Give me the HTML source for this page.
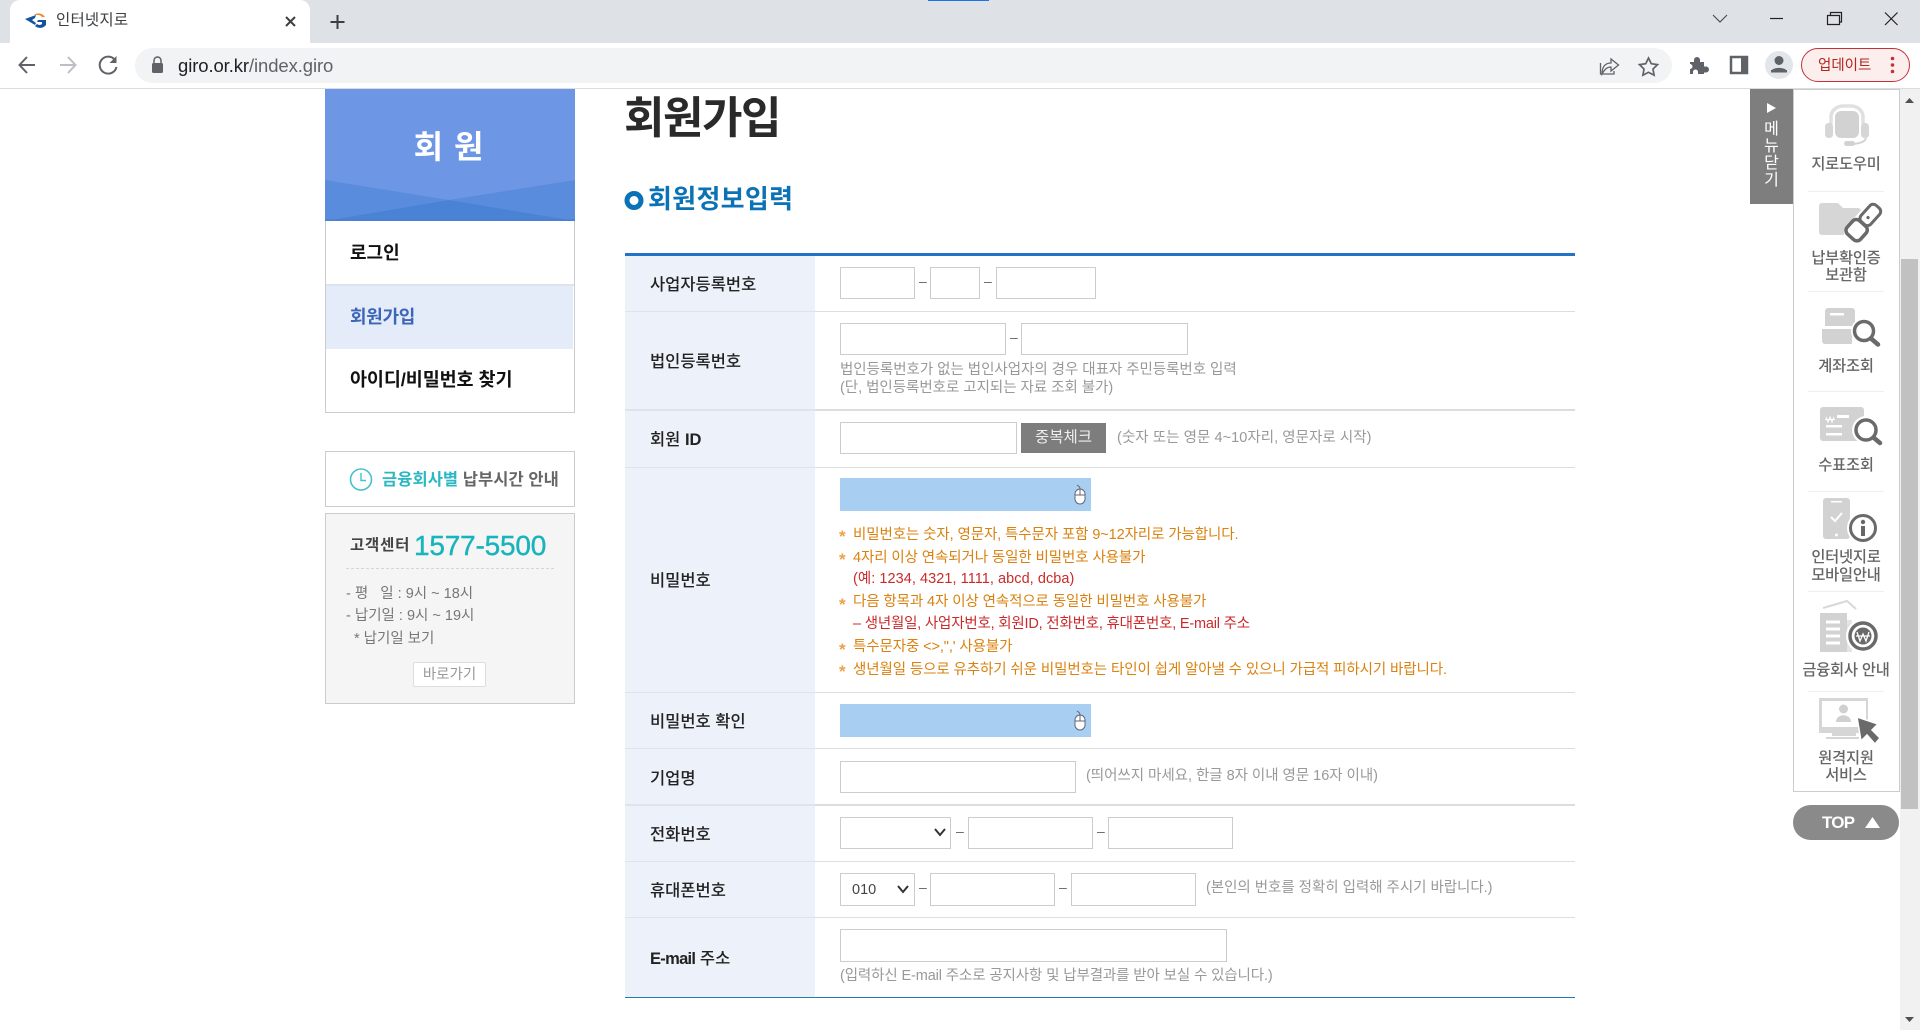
<!DOCTYPE html>
<html lang="ko"><head><meta charset="utf-8"><title>인터넷지로</title>
<style>
html,body{margin:0;padding:0;width:1920px;height:1030px;overflow:hidden;background:#fff}
body{position:relative;font-family:"Liberation Sans","Noto Sans CJK KR",sans-serif;color:#222}
.b,.t,input,select{position:absolute;box-sizing:border-box}
.t{white-space:nowrap;line-height:20px}
.in{position:absolute;box-sizing:border-box;border:1px solid #ccc;background:#fff}
.lb{font-size:16.5px;font-weight:500;color:#222;left:650px}
.h{font-size:14.5px;color:#999;letter-spacing:-.03px}
.o{font-size:14.5px;color:#d9820f;left:853px;letter-spacing:-.1px}
.r{font-size:14.5px;color:#cc2a2a;left:853px;letter-spacing:-.1px}
.s{font-size:17px;font-weight:700;color:#eda04a;left:839px;width:8px}
.m{font-size:15.3px;font-weight:500;color:#666;text-align:center;left:1793px;width:106px;letter-spacing:-.2px}
.ln{position:absolute;left:815px;width:760px;background:#ddd}
.lc{position:absolute;left:625px;width:190px;background:#dfe3ec}
.d{font-size:14px;color:#666}
svg{position:absolute;left:0;top:0}
</style></head><body>
<!-- chrome -->
<div class="b" style="left:0;top:0;width:1920px;height:43px;background:#dee1e6"></div>
<div class="b" style="left:928px;top:0;width:61px;height:1px;background:#1a73e8"></div>
<div class="b" style="left:10px;top:0;width:300px;height:43px;background:#fff;border-radius:10px 10px 0 0"></div>
<div class="b" style="left:0;top:43px;width:1920px;height:45px;background:#fff"></div>
<div class="b" style="left:0;top:88px;width:1920px;height:1px;background:#dadce0"></div>
<div class="b" style="left:135px;top:48px;width:1537px;height:35px;background:#f1f3f4;border-radius:18px"></div>
<div class="t" style="left:56px;top:11px;font-size:15.5px;color:#3c4043;letter-spacing:.2px">인터넷지로</div>
<div class="t" style="left:178px;top:56px;font-size:18.5px;color:#202124;letter-spacing:-.1px">giro.or.kr<span style="color:#5f6368">/index.giro</span></div>
<div class="b" style="left:1801px;top:48px;width:109px;height:34px;border:1.5px solid #c5303a;border-radius:17px;background:#fdeeee"></div>
<div class="t" style="left:1818px;top:56px;font-size:14.5px;color:#b3261e">업데이트</div>

<!-- left sidebar -->
<div class="b" style="left:325px;top:89px;width:250px;height:132px;background:#6d97e4;overflow:hidden"></div>
<div class="t" style="left:325px;width:248px;text-align:center;top:127px;line-height:40px;font-size:32px;font-weight:700;color:#fff;letter-spacing:1px">회 원</div>
<div class="b" style="left:325px;top:221px;width:250px;height:192px;border:1px solid #ccc;border-top:0"></div>
<div class="b" style="left:326px;top:284px;width:248px;height:2px;background:#dde4ee"></div>
<div class="b" style="left:326px;top:286px;width:247px;height:63px;background:#e4ecfa"></div>
<div class="t" style="left:350px;top:243px;font-size:18px;font-weight:700;color:#111">로그인</div>
<div class="t" style="left:350px;top:307px;font-size:18px;font-weight:700;color:#3d66b8;letter-spacing:-.3px">회원가입</div>
<div class="t" style="left:350px;top:370px;font-size:18.5px;font-weight:700;color:#111;letter-spacing:-.1px">아이디/비밀번호 찾기</div>

<div class="b" style="left:325px;top:451px;width:250px;height:56px;border:1px solid #ccc;background:#fff"></div>
<div class="t" style="left:382px;top:470px;font-size:16.5px;font-weight:700;color:#666;letter-spacing:.05px"><span style="color:#2bb8c4">금융회사별</span> 납부시간 안내</div>
<div class="b" style="left:325px;top:513px;width:250px;height:191px;border:1px solid #ccc;background:#f5f5f5"></div>
<div class="t" style="left:350px;top:536px;font-size:15.5px;font-weight:700;color:#444;letter-spacing:.8px">고객센터</div>
<div class="t" style="left:414px;top:530px;line-height:32px;font-size:28px;color:#18b4bd;letter-spacing:-.2px;-webkit-text-stroke:.4px #18b4bd">1577-5500</div>
<div class="b" style="left:346px;top:568px;width:208px;height:0;border-top:1px dashed #d5d5d5"></div>
<div class="t" style="left:346px;top:584px;font-size:14.5px;color:#777">- 평 &nbsp; 일 : 9시 ~ 18시</div>
<div class="t" style="left:346px;top:606px;font-size:14.5px;color:#777">- 납기일 : 9시 ~ 19시</div>
<div class="t" style="left:354px;top:629px;font-size:14.5px;color:#777">* 납기일 보기</div>
<div class="b" style="left:413px;top:662px;width:73px;height:25px;border:1px solid #ddd;background:#fff;border-radius:2px;text-align:center;font-size:14.5px;line-height:24px;color:#999">바로가기</div>

<!-- main -->
<div class="t" style="left:624px;top:94px;line-height:50px;font-size:44px;font-weight:700;color:#2a2a2a;letter-spacing:-1.5px">회원가입</div>
<div class="t" style="left:648px;top:184px;line-height:30px;font-size:26px;font-weight:700;color:#0b72b5;letter-spacing:.3px">회원정보입력</div>

<!-- table -->
<div class="b" style="left:625px;top:256px;width:190px;height:741px;background:#edf1f9"></div>
<div class="b" style="left:625px;top:253px;width:950px;height:3px;background:#2272c9"></div>
<div class="lc" style="top:311px;height:1px"></div><div class="ln" style="top:311px;height:1px"></div>
<div class="lc" style="top:409px;height:2px"></div><div class="ln" style="top:409px;height:2px"></div>
<div class="lc" style="top:467px;height:1px"></div><div class="ln" style="top:467px;height:1px"></div>
<div class="lc" style="top:692px;height:1px"></div><div class="ln" style="top:692px;height:1px"></div>
<div class="lc" style="top:748px;height:1px"></div><div class="ln" style="top:748px;height:1px"></div>
<div class="lc" style="top:804px;height:2px"></div><div class="ln" style="top:804px;height:2px"></div>
<div class="lc" style="top:861px;height:1px"></div><div class="ln" style="top:861px;height:1px"></div>
<div class="lc" style="top:917px;height:1px"></div><div class="ln" style="top:917px;height:1px"></div>
<div class="b" style="left:625px;top:997px;width:950px;height:1px;background:#2a76b0"></div>

<div class="t lb" style="top:275px">사업자등록번호</div>
<div class="t lb" style="top:352px">법인등록번호</div>
<div class="t lb" style="top:430px">회원 <b>ID</b></div>
<div class="t lb" style="top:571px">비밀번호</div>
<div class="t lb" style="top:712px">비밀번호 확인</div>
<div class="t lb" style="top:769px">기업명</div>
<div class="t lb" style="top:825px">전화번호</div>
<div class="t lb" style="top:881px">휴대폰번호</div>
<div class="t lb" style="top:949px"><b style="letter-spacing:-.7px">E-mail</b> 주소</div>

<!-- row1 -->
<div class="in" style="left:840px;top:267px;width:75px;height:32px"></div>
<div class="in" style="left:930px;top:267px;width:50px;height:32px"></div>
<div class="in" style="left:996px;top:267px;width:100px;height:32px"></div>
<div class="t d" style="left:919px;top:271px">–</div><div class="t d" style="left:984px;top:271px">–</div>
<!-- row2 -->
<div class="in" style="left:840px;top:323px;width:166px;height:32px"></div>
<div class="in" style="left:1021px;top:323px;width:167px;height:32px"></div>
<div class="t d" style="left:1010px;top:327px">–</div>
<div class="t h" style="left:840px;top:360px">법인등록번호가 없는 법인사업자의 경우 대표자 주민등록번호 입력</div>
<div class="t h" style="left:840px;top:378px">(단, 법인등록번호로 고지되는 자료 조회 불가)</div>
<!-- row3 -->
<div class="in" style="left:840px;top:422px;width:177px;height:32px"></div>
<div class="b" style="left:1021px;top:423px;width:85px;height:30px;background:#7d7d7d;color:#eee;font-size:15.5px;line-height:29px;text-align:center">중복체크</div>
<div class="t h" style="left:1117px;top:428px;letter-spacing:.05px">(숫자 또는 영문 4~10자리, 영문자로 시작)</div>
<!-- row4 -->
<div class="b" style="left:840px;top:478px;width:251px;height:33px;background:#a8cff2"></div>
<div class="t s" style="top:527px">*</div><div class="t o" style="top:525px">비밀번호는 숫자, 영문자, 특수문자 포함 9~12자리로 가능합니다.</div>
<div class="t s" style="top:550px">*</div><div class="t o" style="top:548px">4자리 이상 연속되거나 동일한 비밀번호 사용불가</div>
<div class="t r" style="top:569px;letter-spacing:.05px">(예: 1234, 4321, 1111, abcd, dcba)</div>
<div class="t s" style="top:595px">*</div><div class="t o" style="top:592px">다음 항목과 4자 이상 연속적으로 동일한 비밀번호 사용불가</div>
<div class="t r" style="top:614px;letter-spacing:-.2px">– 생년월일, 사업자번호, 회원ID, 전화번호, 휴대폰번호, E-mail 주소</div>
<div class="t s" style="top:640px">*</div><div class="t o" style="top:637px">특수문자중 &lt;&gt;,",' 사용불가</div>
<div class="t s" style="top:662px">*</div><div class="t o" style="top:660px">생년월일 등으로 유추하기 쉬운 비밀번호는 타인이 쉽게 알아낼 수 있으니 가급적 피하시기 바랍니다.</div>
<!-- row5 -->
<div class="b" style="left:840px;top:704px;width:251px;height:33px;background:#a8cff2"></div>
<!-- row6 -->
<div class="in" style="left:840px;top:761px;width:236px;height:32px"></div>
<div class="t h" style="left:1086px;top:766px">(띄어쓰지 마세요, 한글 8자 이내 영문 16자 이내)</div>
<!-- row7 -->
<div class="in" style="left:840px;top:817px;width:111px;height:32px"></div>
<div class="t d" style="left:956px;top:821px">–</div>
<div class="in" style="left:968px;top:817px;width:125px;height:32px"></div>
<div class="t d" style="left:1097px;top:821px">–</div>
<div class="in" style="left:1108px;top:817px;width:125px;height:32px"></div>
<!-- row8 -->
<div class="in" style="left:840px;top:873px;width:75px;height:33px"></div>
<div class="t" style="left:852px;top:880px;font-size:14.5px;color:#444">010</div>
<div class="t d" style="left:919px;top:877px">–</div>
<div class="in" style="left:930px;top:873px;width:125px;height:33px"></div>
<div class="t d" style="left:1059px;top:877px">–</div>
<div class="in" style="left:1071px;top:873px;width:125px;height:33px"></div>
<div class="t h" style="left:1206px;top:878px">(본인의 번호를 정확히 입력해 주시기 바랍니다.)</div>
<!-- row9 -->
<div class="in" style="left:840px;top:929px;width:387px;height:33px"></div>
<div class="t h" style="left:840px;top:966px;letter-spacing:-.12px">(입력하신 E-mail 주소로 공지사항 및 납부결과를 받아 보실 수 있습니다.)</div>

<!-- right panel -->
<div class="b" style="left:1900px;top:89px;width:20px;height:941px;background:#f1f1f1"></div>
<div class="b" style="left:1901px;top:259px;width:17px;height:550px;background:#c1c1c1"></div>
<div class="b" style="left:1793px;top:89px;width:107px;height:703px;border:1px solid #ccc;background:#fff"></div>
<div class="b" style="left:1750px;top:89px;width:43px;height:115px;background:#7e7e7e"></div>
<div class="t" style="left:1750px;width:43px;text-align:center;top:120px;font-size:16px;color:#fff">메</div>
<div class="t" style="left:1750px;width:43px;text-align:center;top:137px;font-size:16px;color:#fff">뉴</div>
<div class="t" style="left:1750px;width:43px;text-align:center;top:154px;font-size:16px;color:#fff">닫</div>
<div class="t" style="left:1750px;width:43px;text-align:center;top:171px;font-size:16px;color:#fff">기</div>
<div class="b" style="left:1808px;top:191px;width:76px;height:1px;background:#eee"></div>
<div class="b" style="left:1808px;top:291px;width:76px;height:1px;background:#eee"></div>
<div class="b" style="left:1808px;top:391px;width:76px;height:1px;background:#eee"></div>
<div class="b" style="left:1808px;top:491px;width:76px;height:1px;background:#eee"></div>
<div class="b" style="left:1808px;top:591px;width:76px;height:1px;background:#eee"></div>
<div class="b" style="left:1808px;top:691px;width:76px;height:1px;background:#eee"></div>
<div class="t m" style="top:155px">지로도우미</div>
<div class="t m" style="top:249px">납부확인증</div><div class="t m" style="top:266px">보관함</div>
<div class="t m" style="top:357px">계좌조회</div>
<div class="t m" style="top:456px">수표조회</div>
<div class="t m" style="top:548px">인터넷지로</div><div class="t m" style="top:566px">모바일안내</div>
<div class="t m" style="top:661px">금융회사 안내</div>
<div class="t m" style="top:749px">원격지원</div><div class="t m" style="top:766px">서비스</div>
<div class="b" style="left:1793px;top:805px;width:106px;height:35px;border-radius:18px;background:#8a8a8a"></div>
<div class="t" style="left:1822px;top:813px;font-size:17px;font-weight:700;color:#fff;letter-spacing:-.8px">TOP</div>

<svg width="1920" height="1030" viewBox="0 0 1920 1030" fill="none">
<!-- favicon -->
<path d="M25 19 L36 15 L35 18 L32 20 L36 23 L35 25 Z" fill="#14549e"/>
<path d="M45 17 A7.5 7.5 0 0 0 34 15 L38 15 A5 5 0 0 1 42 17Z" fill="#ef8a2c"/>
<path d="M35 26 A7.5 7.5 0 0 0 46 25 V20 H38 L37 22 H42 V24 A4 4 0 0 1 37 24Z" fill="#14549e"/>
<!-- tab x / plus -->
<path d="M286 17 L295 26 M295 17 L286 26" stroke="#3c4043" stroke-width="2"/>
<path d="M337.500 15 V29 M330.500 22 H344.500" stroke="#3c4043" stroke-width="2"/>
<!-- nav -->
<path d="M35 65 H20 M27 57 L19.500 65 L27 73" stroke="#5f6368" stroke-width="2"/>
<path d="M60 65 H75 M68 57 L75.500 65 L68 73" stroke="#bcbfc3" stroke-width="2"/>
<path d="M115 60 A8.500 8.500 0 1 0 116.500 67" stroke="#5f6368" stroke-width="2"/>
<path d="M116.500 56 V63 H109.500 Z" fill="#5f6368"/>
<!-- lock -->
<rect x="152" y="63" width="11" height="10" rx="1.500" fill="#5f6368"/>
<path d="M154 63 V60.500 A3.500 3.500 0 0 1 161 60.500 V63" stroke="#5f6368" stroke-width="1.500"/>
<!-- window controls -->
<path d="M1713 15 L1720 22 L1727 15" stroke="#3c4043"/>
<path d="M1770 18.500 H1783" stroke="#222" stroke-width="1.200"/>
<path d="M1827.500 15.500 H1839.500 V24.500 H1827.500 Z M1830.500 15 V12.500 H1841.500 V22 H1840" stroke="#222" stroke-width="1.200"/>
<path d="M1885 12.500 L1897.500 25 M1897.500 12.500 L1885 25" stroke="#222" stroke-width="1.200"/>
<!-- share, star -->
<path d="M1600.500 63 V74 H1614 V71" stroke="#5f6368" stroke-width="1.300"/>
<path d="M1602 74 C1602 66 1606 63 1611 63 V59 L1618.500 65 L1611 71 V67 C1607 67 1605 69 1602 74Z" stroke="#5f6368" stroke-width="1.300"/>
<path d="M1648.500 58 L1651.300 63.700 L1657.500 64.600 L1653 69 L1654.100 75.200 L1648.500 72.300 L1642.900 75.200 L1644 69 L1639.500 64.600 L1645.700 63.700 Z" stroke="#5f6368" stroke-width="1.700"/>
<!-- extensions -->
<path d="M1690 62 H1694 V60 A3 3 0 0 1 1700 60 V62 H1704 V66.500 H1706 A3 3 0 0 1 1706 72.500 H1704 V74 H1698 V72 A2.500 2.500 0 0 0 1693 72 V74 H1690 V69 A2.500 2.500 0 0 0 1690 64 Z" fill="#5f6368"/>
<!-- side panel -->
<rect x="1731" y="57" width="16" height="16" stroke="#5f6368" stroke-width="2.500"/>
<rect x="1741" y="57" width="6" height="16" fill="#5f6368"/>
<!-- profile -->
<circle cx="1779" cy="65" r="14" fill="#e2e5ea"/>
<circle cx="1779" cy="60.500" r="4.500" fill="#5f6368"/>
<path d="M1771 72 C1771 66.500 1787 66.500 1787 72 Z" fill="#5f6368"/>
<rect x="1771" y="70" width="16" height="2.500" fill="#5f6368"/>
<circle cx="1892.500" cy="58.500" r="1.800" fill="#c5303a"/><circle cx="1892.500" cy="65" r="1.800" fill="#c5303a"/><circle cx="1892.500" cy="71.500" r="1.800" fill="#c5303a"/>

<!-- sidebar wave -->
<path d="M325 180 L449 200 L575 180 V221 H325 Z" fill="#5a8cdd"/>
<path d="M325 221 L449 200 L575 221 Z" fill="#4a83d6"/>
<path d="M325 220 H575" stroke="#4a7cc8"/>
<!-- clock -->
<circle cx="361" cy="479.500" r="10.500" stroke="#45c0cf" stroke-width="1.600"/>
<path d="M361 473 V480.500 H366" stroke="#45c0cf" stroke-width="1.400"/>
<!-- section ring -->
<circle cx="634" cy="200.500" r="7" stroke="#0b72b5" stroke-width="5"/>

<!-- mouse icons -->
<g stroke="#667" stroke-width="1" fill="#fff">
<rect x="1075" y="489" width="10" height="15" rx="5"/><path d="M1075 495 H1085 M1080 489 V495 M1080 489 C1080 486 1078 486 1077 485" fill="none"/>
<rect x="1075" y="715" width="10" height="15" rx="5"/><path d="M1075 721 H1085 M1080 715 V721 M1080 715 C1080 712 1078 712 1077 711" fill="none"/>
</g>
<!-- select chevrons -->
<path d="M935 829 L940 835 L945 829" stroke="#333" stroke-width="2"/>
<path d="M898 886 L903 892 L908 886" stroke="#333" stroke-width="2"/>

<!-- tab triangle -->
<path d="M1767 103 V113 L1776 108 Z" fill="#fff"/>
<!-- scroll arrows -->
<path d="M1905 103 L1909.500 98 L1914 103 Z" fill="#505050"/>
<path d="M1905 1017 L1909.500 1022 L1914 1017 Z" fill="#505050"/>
<!-- top triangle -->
<path d="M1865 828 L1872.500 817 L1880 828 Z" fill="#fff"/>

<!-- headset -->
<path d="M1831 124 V116 A12 11 0 0 1 1843 106 H1851 A12 11 0 0 1 1863 116 V124" stroke="#e0e0e0" stroke-width="3.500"/>
<rect x="1835" y="111" width="24" height="27" rx="6" fill="#d2d2d2"/>
<rect x="1825" y="123" width="8" height="15" rx="3.500" fill="#d6d6d6"/><rect x="1861" y="123" width="8" height="15" rx="3.500" fill="#d6d6d6"/>
<path d="M1866 138 C1865 142 1860 143 1854 144" stroke="#d2d2d2" stroke-width="2"/><rect x="1844" y="141" width="11" height="5" rx="2.500" fill="#d2d2d2"/>
<!-- folder + usb -->
<path d="M1819 206 A3 3 0 0 1 1822 203 H1838 L1843 208 H1858 A3 3 0 0 1 1861 211 V235 H1822 A3 3 0 0 1 1819 232 Z" fill="#d6d6d6"/>
<g transform="rotate(42 1864 222)">
<rect x="1854" y="198" width="20" height="48" rx="8" fill="#fff"/>
<rect x="1857.500" y="201.500" width="13" height="22" rx="4.500" stroke="#6a6a6a" stroke-width="3" fill="#fff"/>
<rect x="1855" y="224" width="18" height="18" rx="5" stroke="#6a6a6a" stroke-width="3.500" fill="#fff"/>
<circle cx="1864" cy="216" r="1.600" fill="#666"/>
</g>
<!-- account -->
<path d="M1825 311 A3 3 0 0 1 1828 308 H1852 A3 3 0 0 1 1855 311 V326 H1825Z" fill="#d2d2d2"/>
<rect x="1830" y="313" width="14" height="2.500" fill="#fff"/>
<path d="M1822 329 H1852 V344 H1825 A3 3 0 0 1 1822 341Z" fill="#d2d2d2"/>
<circle cx="1864" cy="331" r="13" fill="#fff"/>
<circle cx="1864" cy="331" r="9.500" stroke="#6a6a6a" stroke-width="3.500"/><path d="M1871 338.500 L1878 344.500" stroke="#6a6a6a" stroke-width="4.500" stroke-linecap="round"/>
<!-- cheque -->
<path d="M1820 410 A3 3 0 0 1 1823 407 H1861 A3 3 0 0 1 1864 410 V441 H1823 A3 3 0 0 1 1820 438Z" fill="#d2d2d2"/>
<path d="M1826 417 L1828 422 L1830 417 L1832 422 L1834 417 M1825 419.500 H1835" stroke="#fff" stroke-width="1"/>
<rect x="1837" y="415" width="12" height="3" fill="#fff"/><rect x="1826" y="425" width="16" height="2.500" fill="#fff"/><rect x="1826" y="433" width="16" height="2.500" fill="#fff"/>
<circle cx="1866" cy="430" r="14" fill="#fff"/>
<circle cx="1866" cy="430" r="10" stroke="#6a6a6a" stroke-width="3.500"/><path d="M1873.500 437.500 L1880 443" stroke="#6a6a6a" stroke-width="4.500" stroke-linecap="round"/>
<!-- mobile -->
<rect x="1823" y="498" width="27" height="41" rx="3" fill="#d2d2d2"/>
<rect x="1831" y="501" width="11" height="1.500" fill="#fff"/><circle cx="1836.500" cy="535" r="1.500" fill="#fff"/>
<path d="M1831 517 L1835 521 L1842 513" stroke="#fff" stroke-width="2"/>
<circle cx="1863" cy="528" r="16" fill="#fff"/>
<circle cx="1863" cy="528" r="12.500" stroke="#6a6a6a" stroke-width="3"/>
<rect x="1861" y="526" width="4" height="10" fill="#666"/><circle cx="1863" cy="522" r="2.200" fill="#666"/>
<!-- building -->
<path d="M1820 613 L1847 613 V652 H1820 Z" fill="#d2d2d2"/>
<path d="M1847 620 H1852 V652 H1847 Z" fill="#e4e4e4"/>
<path d="M1823 608 L1847 601 L1856 609" stroke="#d8d8d8" stroke-width="2"/>
<path d="M1826 622 H1840 M1826 629 H1840 M1826 636 H1840 M1826 643 H1840" stroke="#fff" stroke-width="3"/>
<circle cx="1863" cy="636" r="17" fill="#fff"/>
<circle cx="1863" cy="636" r="13" stroke="#6a6a6a" stroke-width="3.500"/>
<circle cx="1863" cy="636" r="8.500" fill="#6a6a6a"/>
<path d="M1857 632 L1860 641 L1863 634 L1866 641 L1869 632 M1856 636 H1870" stroke="#fff" stroke-width="1.300"/>
<!-- remote -->
<rect x="1819" y="698" width="49" height="35" stroke="none" fill="#d6d6d6"/>
<rect x="1822" y="701" width="44" height="29" fill="#fff"/>
<rect x="1819" y="727" width="49" height="6" fill="#d6d6d6"/>
<rect x="1832" y="733" width="24" height="3" fill="#d6d6d6"/><rect x="1826" y="737" width="33" height="2" fill="#d6d6d6"/>
<circle cx="1843.500" cy="709" r="4.500" fill="#d0d0d0"/><path d="M1836 722 C1836 713 1851 713 1851 722Z" fill="#d0d0d0"/>
<path d="M1857 717 L1878 724 L1872 730 L1880 738 L1875 744 L1867 735 L1861 741Z" fill="#6a6a6a" stroke="#fff" stroke-width="1.500"/>
</svg>
</body></html>
